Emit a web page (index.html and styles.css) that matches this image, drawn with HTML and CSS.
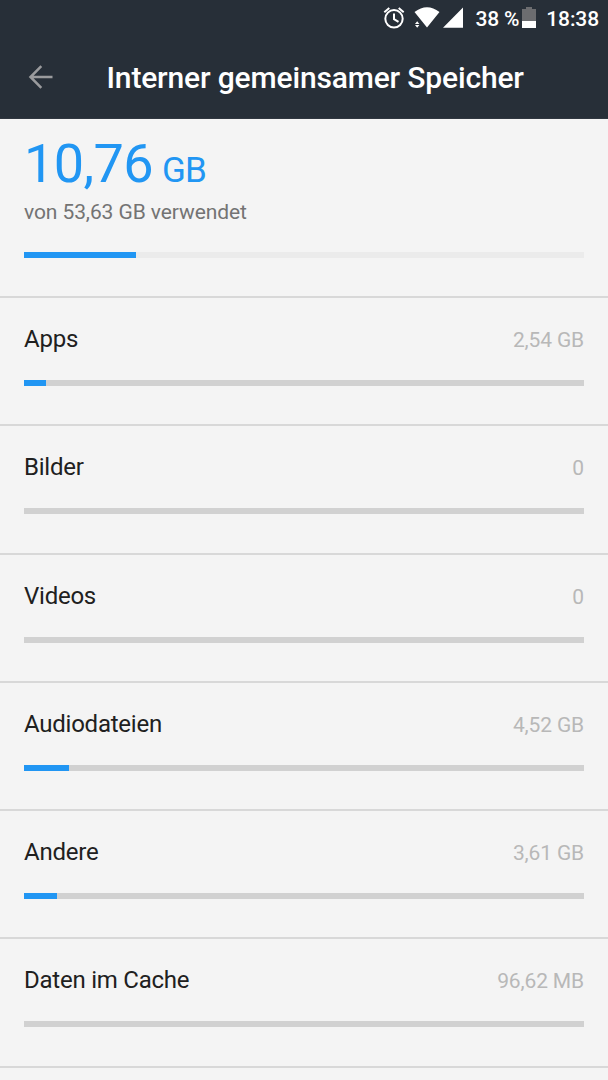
FILE: index.html
```html
<!DOCTYPE html>
<html lang="de">
<head>
<meta charset="utf-8">
<title>Interner gemeinsamer Speicher</title>
<link rel="stylesheet" href="styles.css">
</head>
<body>
<header class="header">
  <div class="status">
    <svg class="status-icons" width="82" height="36" viewBox="0 0 82 36">
      <g fill="none" stroke="#fff" stroke-width="2">
        <circle cx="12" cy="18.800" r="8.700"/>
        <path d="M12 13.500v5.700l4.500 2.700M2.300 12.300l5-4.200M21.700 12.300l-5-4.200"/>
      </g>
      <path fill="#fff" d="M32.500 12Q45 2.500 57.500 12L45 27.500zM61 27.800H81V7.500zM33 24l2.200-2.800 2.200 2.800zM33 25h4.400l-2.200 2.800z"/>
    </svg>
    <span class="percent">38 %</span>
    <svg class="battery" width="14" height="21" viewBox="0 0 14 21">
      <path fill="#6c6d70" d="M0 2h4V0h6v2h4v12H0z"/>
      <path fill="#fff" d="M0 14h14v7H0z"/>
    </svg>
    <time class="clock">18:38</time>
  </div>
  <div class="toolbar">
    <svg class="back" width="26" height="26" viewBox="0 0 26 26" fill="none" stroke="#9a9b9d" stroke-width="2.500"><path d="M25.500 13H4M14.300 2.200L3.500 13l10.800 10.800"/></svg>
    <h1 class="title">Interner gemeinsamer Speicher</h1>
  </div>
</header>
<main>
  <section class="summary">
    <div class="total"><span class="amount">10,76</span><span class="unit">GB</span></div>
    <p class="caption">von 53,63 GB verwendet</p>
    <div class="bar bar-light"><div class="fill" style="width:112px"></div></div>
  </section>
  <section class="item"><div class="row"><span class="name">Apps</span><span class="value">2,54 GB</span></div><div class="bar"><div class="fill" style="width:22px"></div></div></section>
  <section class="item"><div class="row"><span class="name">Bilder</span><span class="value">0</span></div><div class="bar"></div></section>
  <section class="item"><div class="row"><span class="name">Videos</span><span class="value">0</span></div><div class="bar"></div></section>
  <section class="item"><div class="row"><span class="name">Audiodateien</span><span class="value">4,52 GB</span></div><div class="bar"><div class="fill" style="width:45px"></div></div></section>
  <section class="item"><div class="row"><span class="name">Andere</span><span class="value">3,61 GB</span></div><div class="bar"><div class="fill" style="width:33px"></div></div></section>
  <section class="item"><div class="row"><span class="name">Daten im Cache</span><span class="value">96,62 MB</span></div><div class="bar"></div></section>
  <div class="end"></div>
</main>
</body>
</html>
```
FILE: styles.css
```css
* { box-sizing: border-box; }
body { margin: 0; height: 1080px; overflow: hidden; background: #f4f4f4; font-family: Roboto, sans-serif; }
.header { height: 119px; background: #272f38; color: #fff; border-bottom: 1px solid #303740; }
.status { height: 36px; display: flex; align-items: center; justify-content: flex-end; padding-right: 9px; font-size: 21px; font-weight: 500; white-space: nowrap; }
.status-icons { flex: none; }
.percent { margin-left: 11px; line-height: 24px; padding-top: 1px; letter-spacing: -0.2px; }
.battery { margin: 0 10px 1px 3px; }
.clock { line-height: 24px; padding-top: 1px; letter-spacing: -0.1px; }
.toolbar { height: 82px; display: flex; align-items: center; padding-left: 27px; }
.title { margin: 2px 0 0 53.500px; font-size: 30px; line-height: 36px; font-weight: 500; letter-spacing: -0.16px; white-space: nowrap; }
.summary { height: 177px; padding: 14px 24px 0; }
.total { height: 62px; line-height: 62px; color: #2196f3; white-space: nowrap; }
.amount { font-size: 54px; letter-spacing: -0.6px; }
.unit { font-size: 35px; margin-left: 9px; letter-spacing: -0.9px; }
.caption { margin: 4px 0 0; font-size: 21px; line-height: 26px; letter-spacing: -0.09px; color: #737373; }
.bar { height: 6px; background: #d1d1d1; }
.bar-light { margin-top: 27px; background: #ebebeb; }
.fill { height: 6px; background: #2196f3; }
.item { height: 128.250px; border-top: 2px solid #d8d8d8; padding: 26px 24px 0; }
.row { display: flex; justify-content: space-between; align-items: center; height: 32px; margin-bottom: 24px; }
.name { padding-bottom: 2px; font-size: 24px; letter-spacing: -0.24px; color: #202020; }
.value { font-size: 21px; letter-spacing: -0.15px; color: #b8b8b8; }
.end { border-top: 2px solid #d8d8d8; }
```
